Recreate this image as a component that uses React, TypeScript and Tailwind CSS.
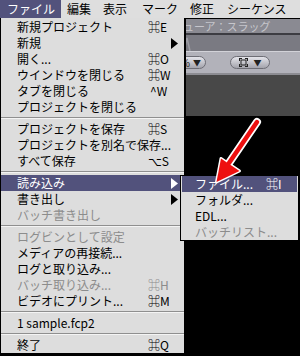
import React from 'react';

// Classic Mac-style "File" menu open over a viewer window, with a red pointer arrow.

const FONT = { fontFamily: '"Noto Sans CJK JP", "DejaVu Sans", sans-serif' };

type Item =
  | { kind: 'sep' }
  | { kind: 'item'; label: string; key?: string; sub?: boolean; disabled?: boolean; active?: boolean };

const MENU: Item[] = [
  { kind: 'item', label: '新規プロジェクト', key: '⌘E' },
  { kind: 'item', label: '新規', sub: true },
  { kind: 'item', label: '開く...', key: '⌘O' },
  { kind: 'item', label: 'ウインドウを閉じる', key: '⌘W' },
  { kind: 'item', label: 'タブを閉じる', key: '^W' },
  { kind: 'item', label: 'プロジェクトを閉じる' },
  { kind: 'sep' },
  { kind: 'item', label: 'プロジェクトを保存', key: '⌘S' },
  { kind: 'item', label: 'プロジェクトを別名で保存...' },
  { kind: 'item', label: 'すべて保存', key: '⌥S' },
  { kind: 'sep' },
  { kind: 'item', label: '読み込み', sub: true, active: true },
  { kind: 'item', label: '書き出し', sub: true },
  { kind: 'item', label: 'バッチ書き出し', disabled: true },
  { kind: 'sep' },
  { kind: 'item', label: 'ログビンとして設定', disabled: true },
  { kind: 'item', label: 'メディアの再接続...' },
  { kind: 'item', label: 'ログと取り込み...' },
  { kind: 'item', label: 'バッチ取り込み...', key: '⌘H', disabled: true },
  { kind: 'item', label: 'ビデオにプリント...', key: '⌘M' },
  { kind: 'sep' },
  { kind: 'item', label: '1 sample.fcp2' },
  { kind: 'sep' },
  { kind: 'item', label: '終了', key: '⌘Q' },
];

const SUBMENU = [
  { label: 'ファイル...', key: '⌘I', active: true },
  { label: 'フォルダ...' },
  { label: 'EDL...' },
  { label: 'バッチリスト...', disabled: true },
];

function SubArrow({ white }: { white?: boolean }) {
  return (
    <svg width="7" height="11" viewBox="0 0 7 11" className="ml-auto mr-[6px]">
      <path d="M0 0 L7 5.5 L0 11 Z" fill={white ? '#ffffff' : '#000000'} />
    </svg>
  );
}

function Separator() {
  return (
    <div className="h-[6px] flex flex-col justify-center">
      <div className="h-px bg-[#8f8f8f]" />
      <div className="h-px bg-[#f4f4f4]" />
    </div>
  );
}

function Pill({ children, className }: { children: React.ReactNode; className?: string }) {
  return (
    <div
      className={`h-[13px] rounded-full border border-[#6e6e76] bg-gradient-to-b from-[#e4e4ea] to-[#a4a4ac] flex items-center text-[10px] leading-none text-[#222] ${className ?? ''}`}
    >
      {children}
    </div>
  );
}

function Viewer() {
  return (
    <div className="flex flex-col">
      <div className="h-px bg-black" />
      <div className="h-[14px] bg-[#8a8a92] pl-[172px] text-[11px] leading-[14px] text-[#c6c6cc] whitespace-nowrap">
        ビューア：スラッグ
      </div>
      <div className="h-[2px] bg-[#3c3c42]" />
      <div className="h-[16px] bg-[#7a7a82] relative">
        <svg width="10" height="16" viewBox="0 0 10 16" className="absolute left-[183px] top-0">
          <path d="M1 16 L4 3 L7 16" stroke="#9c9ca4" strokeWidth="1.5" fill="none" />
        </svg>
      </div>
      <div className="h-px bg-[#d2d2d8]" />
      <div className="h-[21px] bg-[#b2b2ba] flex items-center">
        <Pill className="ml-[170px] w-[36px] justify-end pr-[4px] gap-[3px]">
          <span>%</span>
          <span className="text-[8px]">▼</span>
        </Pill>
        <Pill className="ml-[24px] w-[40px] justify-center gap-[6px]">
          <svg width="9" height="9" viewBox="0 0 9 9">
            <path d="M0 0h3v1H1v2H0zM6 0h3v3H8V1H6zM0 6h1v2h2v1H0zM8 6h1v3H6V8h2z" fill="#222" />
            <rect x="2" y="2" width="5" height="5" fill="none" stroke="#222" strokeWidth="1" />
          </svg>
          <span className="text-[8px]">▼</span>
        </Pill>
      </div>
      <div className="h-[2px] bg-[#8c8c92]" />
      <div className="h-[41px] bg-[#484848]" />
      <div className="flex-1 bg-black" />
    </div>
  );
}

export default function App() {
  return (
    <div className="w-[300px] h-[356px] relative overflow-hidden bg-black select-none" style={FONT}>
      {/* menu bar */}
      <div className="h-[18px] bg-[#dedede] flex text-[12px] leading-[18px] text-black whitespace-nowrap">
        <div className="w-[61px] pl-[7px] bg-[#52527c] text-white">ファイル</div>
        <div className="w-[36px] pl-[6px]">編集</div>
        <div className="w-[39px] pl-[6px]">表示</div>
        <div className="w-[48px] pl-[6px]">マーク</div>
        <div className="w-[37px] pl-[6px]">修正</div>
        <div className="pl-[6px]">シーケンス</div>
      </div>

      <div className="h-[338px] flex flex-col">
        <Viewer />
      </div>

      {/* File menu */}
      <div className="absolute left-0 top-[18px] w-[186px] border-l border-black border-r-[2px] border-b-[3px] bg-[#dddddd] pt-px text-[12px] whitespace-nowrap">
        {MENU.map((it, i) =>
          it.kind === 'sep' ? (
            <Separator key={i} />
          ) : (
            <div
              key={i}
              className={`h-[16px] leading-[16px] flex items-center ${
                it.active ? 'bg-[#52527c] text-white' : it.disabled ? 'text-[#8c8c8c]' : 'text-black'
              }`}
            >
              <span className="w-[147px] shrink-0 pl-[16px]">{it.label}</span>
              {it.key && <span className={it.key.startsWith('^') ? 'ml-[2px]' : ''}>{it.key}</span>}
              {it.sub && <SubArrow white={it.active} />}
            </div>
          )
        )}
      </div>

      {/* Import submenu */}
      <div className="absolute left-[180px] top-[175px] w-[119px] border border-black bg-[#dddddd] text-[12px] whitespace-nowrap">
        {SUBMENU.map((it, i) => (
          <div
            key={i}
            className={`h-[16px] leading-[16px] flex items-center ${
              it.active ? 'bg-[#52527c] text-white mx-px' : it.disabled ? 'text-[#8c8c8c]' : 'text-black'
            }`}
          >
            <span className={`w-[84px] shrink-0 ${it.active ? 'pl-[13px]' : 'pl-[14px]'}`}>{it.label}</span>
            {it.key && <span>{it.key}</span>}
          </div>
        ))}
      </div>

      {/* red pointer arrow */}
      <svg className="absolute left-0 top-0 pointer-events-none" width="300" height="356" viewBox="0 0 300 356">
        <path d="M257 122 L229 163" stroke="#ffffff" strokeWidth="8" strokeLinecap="round" />
        <path d="M216.5 182 L221 158.5 L239.5 171 Z" fill="#ffffff" stroke="#ffffff" strokeWidth="3" strokeLinejoin="round" />
        <path d="M257 122 L229 163" stroke="#ee1010" strokeWidth="4.5" strokeLinecap="round" />
        <path d="M216.5 182 L221 158.5 L239.5 171 Z" fill="#ee1010" />
      </svg>
    </div>
  );
}
